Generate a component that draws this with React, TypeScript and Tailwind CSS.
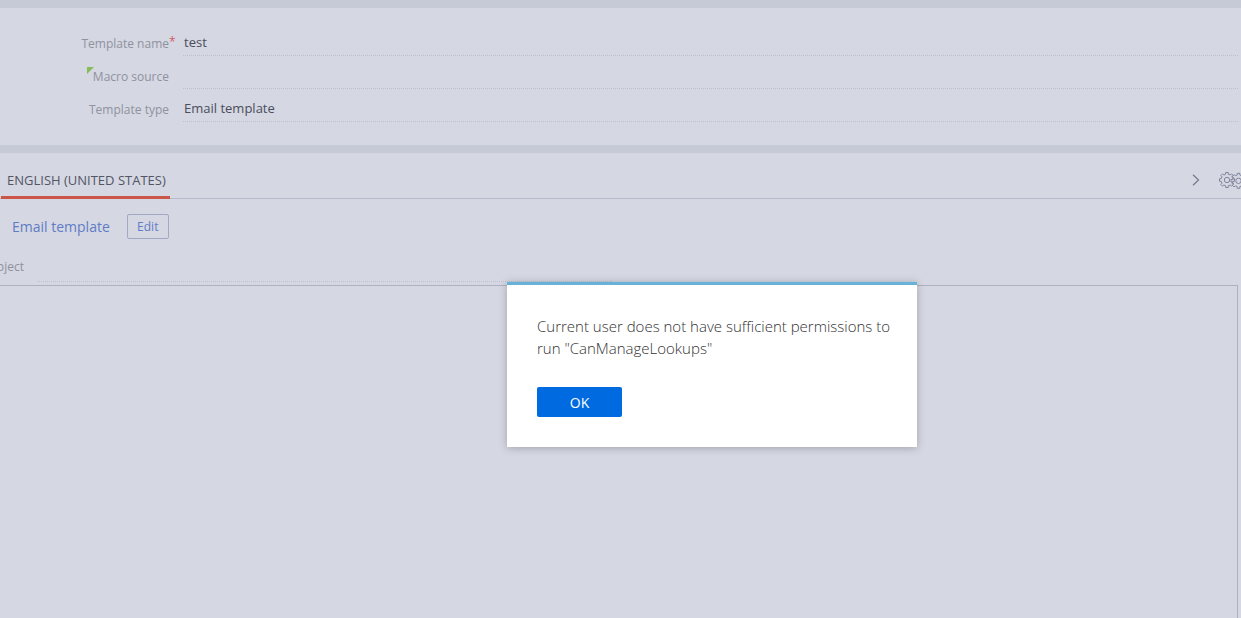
import React, { useState } from "react";

const GEAR_PATH =
  "M-1.3 -5.8V-7.5H1.3V-5.8L3.2 -5L4.4 -6.2L6.2 -4.4L5 -3.2L5.8 -1.3H7.5V1.3H5.8L5 3.2L6.2 4.4L4.4 6.2L3.2 5L1.3 5.8V7.5H-1.3V5.8L-3.2 5L-4.4 6.2L-6.2 4.4L-5 3.2L-5.8 1.3H-7.5V-1.3H-5.8L-5 -3.2L-6.2 -4.4L-4.4 -6.2L-3.2 -5Z";

const GearsIcon: React.FC = () => (
  <svg
    width="22"
    height="18"
    viewBox="0 0 22 18"
    fill="none"
    stroke="#81859c"
    aria-hidden="true">
    <g transform="translate(8 9)">
      <path d={GEAR_PATH} />
      <circle r="2.7" />
    </g>
    <g transform="translate(19.5 9.8)">
      <path d={GEAR_PATH} />
      <circle r="2.7" />
    </g>
  </svg>
);

interface FieldProps {
  id: string;
  label: string;
  value?: string;
  required?: boolean;
  marked?: boolean;
}

const Field: React.FC<FieldProps> = ({ id, label, value = "", required, marked }) => (
  <div className="flex h-8 items-stretch">
    <label
      htmlFor={id}
      className="flex w-[183px] shrink-0 items-center justify-end pr-[14px] pt-2 text-xs text-[#8f92a0]">
      <span className="relative">
        {marked && (
          <svg
            className="absolute -left-1.5 -top-0.5"
            width="7"
            height="7"
            aria-hidden="true">
            <path d="M0 0H7L0 7Z" fill="#86bb58" />
          </svg>
        )}
        {label}
        {required && (
          <span className="absolute left-full -top-0.5 text-xs text-[#d0606a]">*</span>
        )}
      </span>
    </label>
    <input
      id={id}
      defaultValue={value}
      className="mr-[3px] min-w-0 flex-1 border-b border-dotted border-[#bec0cd] bg-transparent pl-px pt-1.5 text-[13px] text-[#4a4d5c] outline-none"
    />
  </div>
);

const App: React.FC = () => {
  const [open, setOpen] = useState(true);

  return (
    <div className="relative flex min-h-screen flex-col overflow-hidden bg-[#d5d7e2] font-['Open_Sans',sans-serif]">
      {/* Template fields */}
      <section className="border-y-8 border-[#c6c9d6] pb-[23px] pt-4">
        <div className="flex flex-col gap-px">
          <Field id="name" label="Template name" value="test" required />
          <Field id="macro" label="Macro source" marked />
          <Field id="type" label="Template type" value="Email template" />
        </div>
      </section>

      {/* Language tabs */}
      <nav className="flex h-[46px] items-stretch justify-between border-b border-[#b6b9c9] pl-px">
        <button
          type="button"
          className="-mb-px border-b-3 border-[#cb5648] pl-1.5 pr-1 pt-3 text-[13px] text-[#525564]">
          ENGLISH (UNITED STATES)
        </button>
        <div className="flex items-center gap-[19px] pt-2">
          <button type="button" aria-label="Next tab">
            <svg
              width="8"
              height="12"
              viewBox="0 0 8 12"
              fill="none"
              stroke="#767a8e"
              strokeWidth="1.2"
              aria-hidden="true">
              <path d="M1 0.7L6.5 6L1 11.3" />
            </svg>
          </button>
          <button type="button" aria-label="Settings">
            <GearsIcon />
          </button>
        </div>
      </nav>

      {/* Template content */}
      <div className="flex items-center gap-[17px] pl-3 pt-[15px]">
        <h2 className="text-sm text-[#5f7cc6]">Email template</h2>
        <button
          type="button"
          className="h-[25px] w-[42px] rounded-xs border border-[#a3a9c3] text-xs text-[#5f7cc6]">
          Edit
        </button>
      </div>
      <div className="mt-3 flex h-[31px] w-[612px]">
        <label
          htmlFor="subject"
          className="mr-[13px] flex w-6 items-center justify-end overflow-hidden text-xs text-[#8f92a0]">
          Subject
        </label>
        <input
          id="subject"
          className="min-w-0 flex-1 border-b border-dotted border-[#bec0cd] bg-transparent text-[13px] outline-none"
        />
      </div>
      <div className="mr-[3px] mt-[3px] flex-1 border-r border-t border-[#aeb1c1]" />

      {/* Message box */}
      {open && (
        <div className="absolute inset-0 flex items-center justify-center pl-[183px] pt-[111px]">
          <div
            role="alertdialog"
            aria-describedby="message"
            className="w-[410px] border-t-3 border-[#68b1d8] bg-white py-[30px] pl-[30px] pr-5 shadow-[0_1px_8px_rgba(0,0,0,0.25)]">
            <p id="message" className="text-[15px] font-light leading-[22px] text-[#333]">
              Current user does not have sufficient permissions to run "CanManageLookups"
            </p>
            <button
              type="button"
              onClick={() => setOpen(false)}
              className="mt-7 block h-[30px] w-[85px] rounded-xs bg-[#006be0] pt-px text-sm text-white">
              OK
            </button>
          </div>
        </div>
      )}
    </div>
  );
};

export default App;
